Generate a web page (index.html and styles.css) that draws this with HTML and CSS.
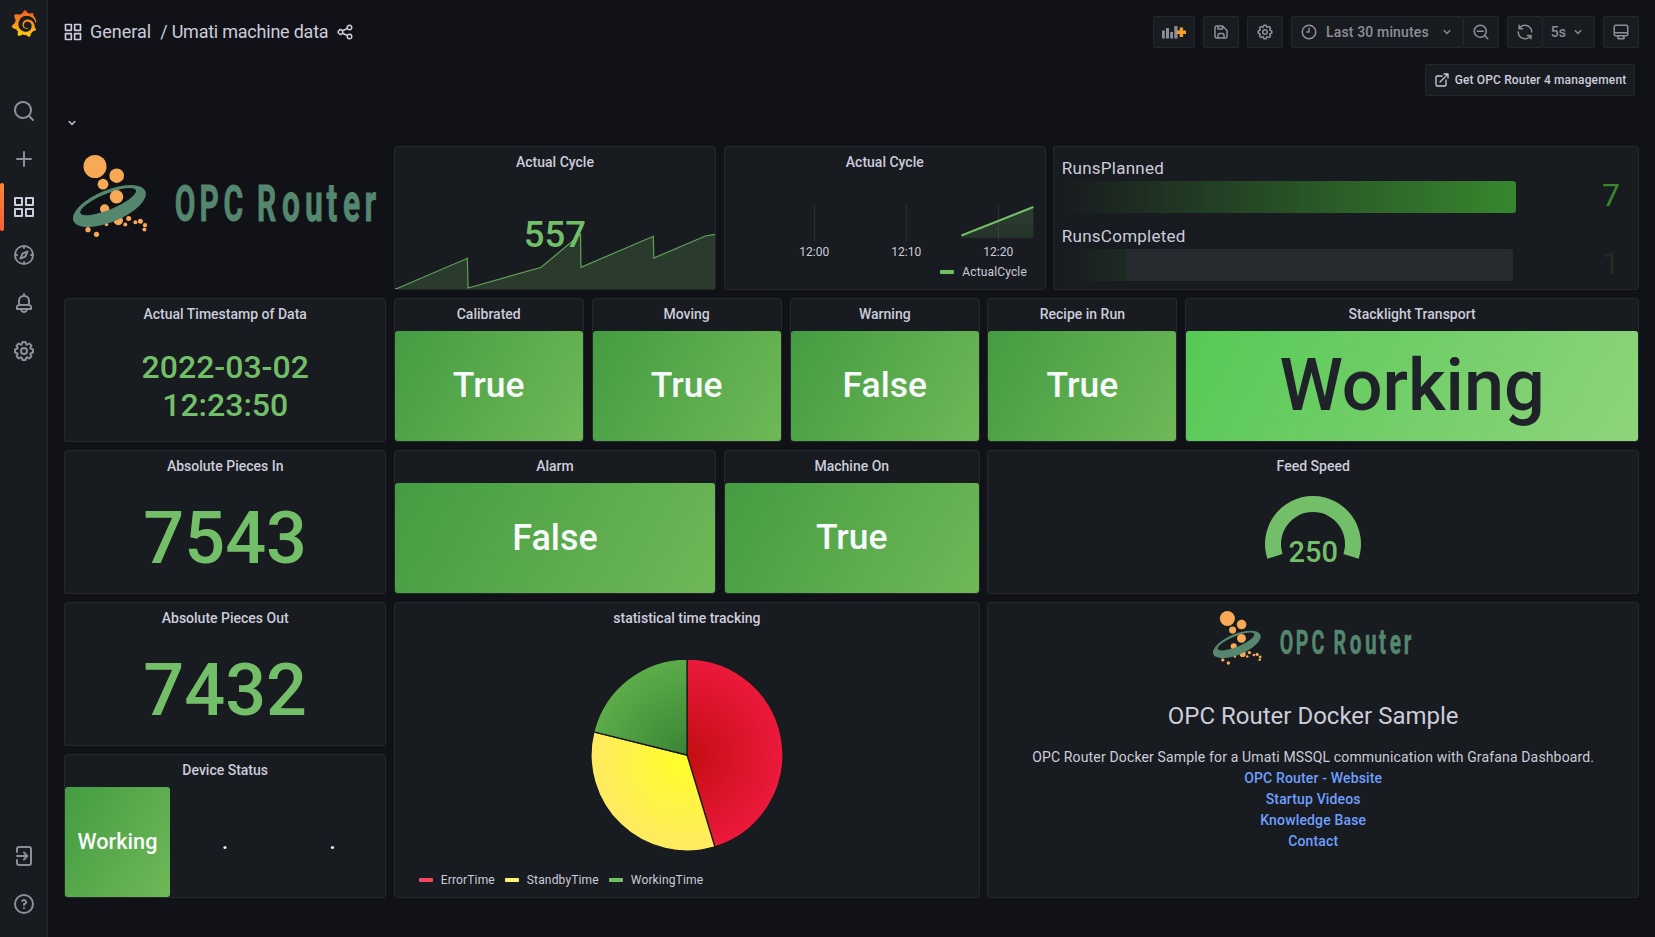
FILE: index.html
```html
<!DOCTYPE html>
<html lang="en">
<head>
<meta charset="utf-8">
<title>Umati machine data - Grafana</title>
<link rel="stylesheet" href="styles.css">
</head>
<body>
<svg class="sprite" width="0" height="0" aria-hidden="true">
  <defs>
    <linearGradient id="grafana-fill" x1="0" y1="1" x2="0" y2="0"><stop offset="0" stop-color="#fcd00a"/><stop offset="1" stop-color="#f05a28"/></linearGradient>
    <symbol id="i-grafana" viewBox="0 0 351 365"><path fill="url(#grafana-fill)" d="M342,161.2c-0.6-6.1-1.6-13.1-3.6-20.9c-2-7.7-5-16.2-9.4-25c-4.4-8.8-10.1-17.9-17.5-26.8c-2.9-3.5-6.1-6.9-9.5-10.2c5.1-20.3-6.2-37.9-6.2-37.9c-19.5-1.2-31.9,6.1-36.5,9.4c-0.8-0.3-1.5-0.7-2.3-1c-3.3-1.3-6.7-2.6-10.3-3.7c-3.5-1.1-7.1-2.1-10.8-3c-3.7-0.9-7.4-1.6-11.2-2.2c-0.7-0.1-1.3-0.2-2-0.3c-8.5-27.2-32.9-38.6-32.9-38.6c-27.3,17.3-32.4,41.5-32.4,41.5s-0.1,0.5-0.3,1.4c-1.5,0.4-3,0.9-4.5,1.3c-2.1,0.6-4.2,1.4-6.2,2.2c-2.1,0.8-4.1,1.6-6.2,2.5c-4.1,1.8-8.2,3.8-12.2,6c-3.9,2.2-7.7,4.6-11.4,7.1c-0.5-0.2-1-0.4-1-0.4c-37.8-14.4-71.3,2.9-71.3,2.9c-3.1,40.2,15.1,65.5,18.7,70.1c-0.9,2.5-1.7,5-2.5,7.5c-2.8,9.1-4.9,18.4-6.2,28.1c-0.2,1.4-0.4,2.8-0.5,4.2C18.8,192.7,8.5,228,8.5,228c29.1,33.5,63.1,35.6,63.1,35.6c0,0,0.1-0.1,0.1-0.1c4.3,7.7,9.3,15,14.9,21.9c2.4,2.9,4.8,5.6,7.4,8.3c-10.6,30.4,1.5,55.6,1.5,55.6c32.4,1.2,53.7-14.2,58.2-17.7c3.2,1.1,6.5,2.1,9.8,2.9c10,2.6,20.2,4.1,30.4,4.5c2.5,0.1,5.1,0.2,7.6,0.1l5.2-0.1l0,0.1c15.3,21.8,42.1,24.9,42.1,24.9c19.1-20.1,20.2-40.1,20.2-44.4c0-0.6,0-1.2,0-1.8c4-2.8,7.8-5.8,11.4-9.1c7.6-6.9,14.3-14.8,19.9-23.3c0.5-0.8,1-1.6,1.5-2.4c21.6,1.2,36.9-13.4,36.9-13.4c-3.6-22.5-16.4-33.5-19.1-35.6c-0.3-0.3-0.6-0.5-1-0.7c0.1-1.4,0.2-2.7,0.3-4.1c0.2-2.4,0.2-4.9,0.2-7.3l0-3.8l-0.2-3.5c-0.1-1.3-0.2-2.6-0.4-3.8l-0.5-3.8c-0.4-2.5-0.8-4.9-1.4-7.4c-2.3-9.7-6.1-18.9-11-27.2c-5-8.3-11.2-15.6-18.3-21.8c-7-6.2-14.9-11.2-23.1-14.9c-8.3-3.7-16.9-6.1-25.5-7.2c-4.3-0.6-8.6-0.8-12.9-0.7l-4.8,0.1c-0.6,0-1.2,0.1-1.7,0.1c-2.2,0.2-4.4,0.5-6.5,0.9c-8.6,1.6-16.7,4.7-23.8,9c-7.1,4.3-13.3,9.6-18.3,15.6c-5,6-8.9,12.7-11.6,19.6c-2.7,6.9-4.2,14.1-4.6,21c-0.1,1.7-0.1,3.5-0.1,5.2l0.1,2.7c0.1,0.8,0.1,1.7,0.2,2.5c0.3,3.5,1,6.9,1.9,10.1c1.9,6.5,4.9,12.4,8.6,17.4c3.7,5,8.2,9.1,12.9,12.4c4.7,3.2,9.8,5.5,14.8,7c5,1.5,10,2.1,14.7,2.1c1.7,0,3.4,0,5-0.2c3-0.3,5-0.7,7.2-1.3c2-0.7,4-1.5,5.7-2.4c1.8-0.9,3.4-2,5-3c0.4-0.3,0.9-0.6,1.3-1c1.6-1.3,1.9-3.7,0.6-5.3c-1.1-1.4-3.1-1.8-4.7-0.9c-0.4,0.2-0.8,0.4-1.2,0.6c-1.4,0.7-2.8,1.3-4.3,1.8c-1.5,0.5-3.1,0.9-4.7,1.2c-2.4,0.3-5,0.4-7.7,0.3c-3.7-0.2-9.4-1.3-14.3-3.6c-3.6-1.6-7-3.8-10.1-6.6c-3.1-2.8-5.8-6.1-7.9-9.9c-2.1-3.8-3.6-8-4.3-12.4c-0.3-2.2-0.5-4.5-0.4-6.7c0.1-2.1,0.4-4.9,0.7-7.1c1.7-9.6,6.5-19,13.9-26.1c1.9-1.8,3.9-3.4,6-4.9c2.1-1.5,4.4-2.8,6.8-3.9c2.4-1.1,4.8-2,7.4-2.7c2.5-0.7,5.1-1.1,7.8-1.4c2.6-0.2,5.4-0.2,8.2-0.1c2.9,0.2,5.7,0.6,8.5,1.3c5.6,1.2,11.1,3.3,16.2,6.1c10.2,5.7,18.9,14.5,24.2,25.1c2.7,5.3,4.6,11,5.5,16.9c0.2,1.5,0.4,3,0.5,4.5l0.2,4.4l0,2.1c0,1.6-0.1,2.4-0.1,3.7c-0.1,1.6-0.3,3.3-0.5,4.9c-0.5,3.2-1.1,6.4-1.9,9.5c-0.8,3.1-1.8,6.2-3,9.3c-2.4,6-5.6,11.8-9.4,17.1c-7.7,10.6-18.2,19.2-30.2,24.7c-6,2.7-12.3,4.7-18.8,5.7c-3.2,0.6-6.5,0.9-9.8,1l-5,0c-1.8,0-3.5-0.1-5.3-0.3c-7-0.5-13.9-1.8-20.7-3.7c-6.7-1.9-13.2-4.6-19.4-7.8c-12.3-6.6-23.4-15.6-32-26.5c-4.3-5.4-8.1-11.3-11.2-17.4c-3.1-6.1-5.6-12.6-7.4-19.1c-1.8-6.6-2.9-13.3-3.4-20.1l-0.2-9c0.1-3.3,0.4-6.8,0.8-10.2c0.4-3.4,1-6.9,1.7-10.3c0.7-3.4,1.5-6.8,2.5-10.2c1.9-6.7,4.3-13.2,7.1-19.3c5.7-12.2,13.1-23.1,22-31.8c2.2-2.2,4.5-4.2,6.9-6.2c2.4-1.9,4.9-3.7,7.5-5.4c2.5-1.7,5.2-3.2,7.9-4.6c10-5 22-8.700 34-10.500c12-1.500 20-1.500 29-1c5.800,0.200 11.500,0.900 17,1.900c11.100,2.100,21.500,5.600,31,10.300c9.500,4.600,17.900,10.300,25.300,16.500c6,5 12,11 17,17c5.200,6.700,9.400,13.500,12.700,19.900c5,10 7,18 8.900,26.500c0.300,1.400,1.600,2.300,3,2.100c1.500-0.100,2.600-1.300,2.600-2.800C342.600,170.400,342.500,166.100,342,161.200z"/></symbol>
    <symbol id="i-search" viewBox="0 0 24 24"><path d="M21.71,20.29,18,16.61A9,9,0,1,0,16.61,18l3.68,3.68a1,1,0,0,0,1.42,0A1,1,0,0,0,21.71,20.29ZM11,18a7,7,0,1,1,7-7A7,7,0,0,1,11,18Z"/></symbol>
    <symbol id="i-zoom-out" viewBox="0 0 24 24"><path d="M21.71,20.29,18,16.61A9,9,0,1,0,16.61,18l3.68,3.68a1,1,0,0,0,1.42,0A1,1,0,0,0,21.71,20.29ZM11,18a7,7,0,1,1,7-7A7,7,0,0,1,11,18ZM15,10H7a1,1,0,0,0,0,2h8a1,1,0,0,0,0-2Z"/></symbol>
    <symbol id="i-plus" viewBox="0 0 24 24"><path d="M19,11H13V5a1,1,0,0,0-2,0v6H5a1,1,0,0,0,0,2h6v6a1,1,0,0,0,2,0V13h6a1,1,0,0,0,0-2Z"/></symbol>
    <symbol id="i-apps" viewBox="0 0 24 24"><path d="M10,13H3a1,1,0,0,0-1,1v7a1,1,0,0,0,1,1h7a1,1,0,0,0,1-1V14A1,1,0,0,0,10,13ZM9,20H4V15H9ZM21,2H14a1,1,0,0,0-1,1v7a1,1,0,0,0,1,1h7a1,1,0,0,0,1-1V3A1,1,0,0,0,21,2ZM20,9H15V4h5Zm1,4H14a1,1,0,0,0-1,1v7a1,1,0,0,0,1,1h7a1,1,0,0,0,1-1V14A1,1,0,0,0,21,13Zm-1,7H15V15h5ZM10,2H3A1,1,0,0,0,2,3v7a1,1,0,0,0,1,1h7a1,1,0,0,0,1-1V3A1,1,0,0,0,10,2ZM9,9H4V4H9Z"/></symbol>
    <symbol id="i-compass" viewBox="0 0 24 24"><path d="M12,2A10,10,0,1,0,22,12,10,10,0,0,0,12,2Zm1,17.93V19a1,1,0,0,0-2,0v.93A8,8,0,0,1,4.070,13H5a1,1,0,0,0,0-2H4.070A8,8,0,0,1,11,4.070V5a1,1,0,0,0,2,0V4.070A8,8,0,0,1,19.930,11H19a1,1,0,0,0,0,2h.93A8,8,0,0,1,13,19.930ZM15.140,7.550l-5,2.120a1,1,0,0,0-.52.52l-2.120,5a1,1,0,0,0,.21,1.100,1,1,0,0,0,.7.3.93.93,0,0,0,.4-.09l5-2.120a1,1,0,0,0,.52-.52l2.120-5a1,1,0,0,0-1.310-1.310Zm-2.490,5.100-2.280,1,1-2.280,2.280-1Z"/></symbol>
    <symbol id="i-bell" viewBox="0 0 24 24"><path d="M18,13.18V10a6,6,0,0,0-5-5.91V3a1,1,0,0,0-2,0V4.090A6,6,0,0,0,6,10v3.180A3,3,0,0,0,4,16v2a1,1,0,0,0,1,1H8.140a4,4,0,0,0,7.720,0H19a1,1,0,0,0,1-1V16A3,3,0,0,0,18,13.180ZM8,10a4,4,0,0,1,8,0v3H8Zm4,10a2,2,0,0,1-1.720-1h3.440A2,2,0,0,1,12,20Zm6-3H6V16a1,1,0,0,1,1-1H17a1,1,0,0,1,1,1Z"/></symbol>
    <symbol id="i-cog" viewBox="0 0 24 24"><path d="M21.32,9.55l-1.89-.63.89-1.78A1,1,0,0,0,20.13,6L18,3.87a1,1,0,0,0-1.15-.19l-1.78.89-.63-1.89A1,1,0,0,0,13.5,2h-3a1,1,0,0,0-.95.68L8.92,4.57,7.14,3.68A1,1,0,0,0,6,3.87L3.87,6a1,1,0,0,0-.19,1.15l.89,1.78-1.89.63A1,1,0,0,0,2,10.5v3a1,1,0,0,0,.68.95l1.89.63-.89,1.78A1,1,0,0,0,3.87,18L6,20.13a1,1,0,0,0,1.15.19l1.78-.89.63,1.89a1,1,0,0,0,.95.68h3a1,1,0,0,0,.95-.68l.63-1.89,1.78.89A1,1,0,0,0,18,20.13L20.13,18a1,1,0,0,0,.19-1.15l-.89-1.78,1.89-.63A1,1,0,0,0,22,13.5v-3A1,1,0,0,0,21.32,9.55ZM20,12.78l-1.2.4A2,2,0,0,0,17.64,16l.57,1.14-1.1,1.1L16,17.64a2,2,0,0,0-2.79,1.16l-.4,1.2H11.22l-.4-1.2A2,2,0,0,0,8,17.64l-1.14.57-1.1-1.1L6.36,16A2,2,0,0,0,5.2,13.18L4,12.78V11.22l1.2-.4A2,2,0,0,0,6.36,8L5.79,6.89l1.1-1.1L8,6.36A2,2,0,0,0,10.82,5.2l.4-1.2h1.56l.4,1.2A2,2,0,0,0,16,6.36l1.14-.57,1.1,1.1L17.64,8a2,2,0,0,0,1.16,2.79l1.2.4ZM12,8a4,4,0,1,0,4,4A4,4,0,0,0,12,8Zm0,6a2,2,0,1,1,2-2A2,2,0,0,1,12,14Z"/></symbol>
    <symbol id="i-signin" viewBox="0 0 24 24"><path fill="none" stroke="currentColor" stroke-width="2" stroke-linecap="round" stroke-linejoin="round" d="M5,8V5a2,2,0,0,1,2-2H17a2,2,0,0,1,2,2V19a2,2,0,0,1-2,2H7a2,2,0,0,1-2-2V16M5,12H15M12,8.500L15.300,12L12,15.500"/></symbol>
    <symbol id="i-help" viewBox="0 0 24 24"><path d="M11.29,15.29a1.58,1.58,0,0,0-.12.15.76.76,0,0,0-.09.18.64.64,0,0,0-.06.18,1.36,1.36,0,0,0,0,.2.84.84,0,0,0,.08.38.9.9,0,0,0,.54.54.94.94,0,0,0,.76,0,.9.9,0,0,0,.54-.54A1,1,0,0,0,13,16a1,1,0,0,0-.29-.71A1,1,0,0,0,11.290,15.290ZM12,2A10,10,0,1,0,22,12,10,10,0,0,0,12,2Zm0,18a8,8,0,1,1,8-8A8,8,0,0,1,12,20ZM12,7A3,3,0,0,0,9.400,8.500a1,1,0,1,0,1.730,1A1,1,0,0,1,12,9a1,1,0,0,1,0,2,1,1,0,0,0-1,1v1a1,1,0,0,0,2,0v-.18A3,3,0,0,0,12,7Z"/></symbol>
    <symbol id="i-share" viewBox="0 0 24 24"><path d="M18,14a4,4,0,0,0-3.080,1.480l-5.100-2.350a3.640,3.640,0,0,0,0-2.260l5.100-2.350A4,4,0,1,0,14,6a4.170,4.170,0,0,0,.07.71L8.790,9.140a4,4,0,1,0,0,5.720l5.280,2.430A4.170,4.170,0,0,0,14,18a4,4,0,1,0,4-4ZM18,4a2,2,0,1,1-2,2A2,2,0,0,1,18,4ZM6,14a2,2,0,1,1,2-2A2,2,0,0,1,6,14Zm12,6a2,2,0,1,1,2-2A2,2,0,0,1,18,20Z"/></symbol>
    <symbol id="i-down" viewBox="0 0 24 24"><path d="M17,9.170a1,1,0,0,0-1.410,0L12,12.710,8.460,9.170a1,1,0,0,0-1.410,0,1,1,0,0,0,0,1.420l4.240,4.240a1,1,0,0,0,1.420,0L17,10.590A1,1,0,0,0,17,9.170Z"/></symbol>
    <symbol id="i-save" viewBox="0 0 24 24"><path d="M20.710,9.290l-6-6a1,1,0,0,0-.32-.21A1.090,1.090,0,0,0,14,3H6A3,3,0,0,0,3,6V18a3,3,0,0,0,3,3H18a3,3,0,0,0,3-3V10A1,1,0,0,0,20.710,9.290ZM9,5h4V7H9Zm6,14H9V16a1,1,0,0,1,1-1h4a1,1,0,0,1,1,1Zm4-1a1,1,0,0,1-1,1H17V16a3,3,0,0,0-3-3H10a3,3,0,0,0-3,3v3H6a1,1,0,0,1-1-1V6A1,1,0,0,1,6,5H7V8A1,1,0,0,0,8,9h6a1,1,0,0,0,1-1V6.410l4,4Z"/></symbol>
    <symbol id="i-clock" viewBox="0 0 24 24"><path d="M12,2A10,10,0,1,0,22,12,10,10,0,0,0,12,2Zm0,18a8,8,0,1,1,8-8A8,8,0,0,1,12,20ZM12,6a1,1,0,0,0-1,1v4H9a1,1,0,0,0,0,2h3a1,1,0,0,0,1-1V7A1,1,0,0,0,12,6Z"/></symbol>
    <symbol id="i-sync" viewBox="0 0 24 24"><path d="M19.910,15.510H15.380a1,1,0,0,0,0,2h2.400A8,8,0,0,1,4,12a1,1,0,1,0-2,0,10,10,0,0,0,16.880,7.230V21a1,1,0,0,0,2,0V16.500A1,1,0,0,0,19.910,15.510ZM12,2A10,10,0,0,0,5.120,4.770V3a1,1,0,0,0-2,0V7.500a1,1,0,0,0,1,1h4.500a1,1,0,0,0,0-2H6.220A8,8,0,0,1,20,12a1,1,0,0,0,2,0A10,10,0,0,0,12,2Z"/></symbol>
    <symbol id="i-monitor" viewBox="0 0 24 24"><path d="M19,2H5A3,3,0,0,0,2,5V15a3,3,0,0,0,3,3H7.640l-.58,1a2,2,0,0,0,0,2,2,2,0,0,0,1.750,1h6.460A2,2,0,0,0,17,21a2,2,0,0,0,0-2l-.59-1H19a3,3,0,0,0,3-3V5A3,3,0,0,0,19,2ZM8.770,20,10,18H14l1.200,2ZM20,15a1,1,0,0,1-1,1H5a1,1,0,0,1-1-1V14H20Zm0-3H4V5A1,1,0,0,1,5,4H19a1,1,0,0,1,1,1Z"/></symbol>
    <symbol id="i-external" viewBox="0 0 24 24"><path d="M18,10.820a1,1,0,0,0-1,1V19a1,1,0,0,1-1,1H5a1,1,0,0,1-1-1V8A1,1,0,0,1,5,7h7.180a1,1,0,0,0,0-2H5A3,3,0,0,0,2,8V19a3,3,0,0,0,3,3H16a3,3,0,0,0,3-3V11.820A1,1,0,0,0,18,10.820Zm3.920-8.200a1,1,0,0,0-.54-.54A1,1,0,0,0,21,2H15a1,1,0,0,0,0,2h3.590L8.290,14.290a1,1,0,0,0,0,1.420,1,1,0,0,0,1.420,0L20,5.410V9a1,1,0,0,0,2,0V3A1,1,0,0,0,21.920,2.620Z"/></symbol>
    <symbol id="logo" viewBox="0 0 304 84">
      <g fill="#f8a955">
        <circle cx="22" cy="11.500" r="11.500"/><circle cx="43.700" cy="20.700" r="7.300"/><circle cx="30" cy="29.200" r="5.400"/>
        <circle cx="31.700" cy="54" r="4.700"/><circle cx="45.300" cy="65.500" r="4.700"/>
        <circle cx="15" cy="74.700" r="2.600"/><circle cx="23.500" cy="79.300" r="2.600"/><circle cx="33.500" cy="69.500" r="1.800"/>
        <circle cx="52.300" cy="69.400" r="2"/><circle cx="55.700" cy="63.400" r="2.500"/><circle cx="62.400" cy="67.200" r="2"/><circle cx="67.400" cy="66.300" r="2.500"/><circle cx="72" cy="70.200" r="2.100"/><circle cx="71.400" cy="74.500" r="2"/>
      </g>
      <path fill="#55876f" fill-rule="evenodd" transform="translate(36.400 51) rotate(-22.500)" d="M-38.900,0a38.900,16 0 1 0 77.800,0a38.900,16 0 1 0 -77.800,0ZM-29.500,-4.500a30,8 0 1 0 60,0a30,8 0 1 0 -60,0Z"/>
      <circle cx="43.500" cy="41.800" r="6.800" fill="#f8a955"/>
      <text class="logo-text" transform="translate(102 65.500) scale(.6 1)"><tspan x="-.3 40.800 80.800 110 136.500">OPC R</tspan><tspan class="logo-lower" x="178.400 216.700 252.500 280 315.700">outer</tspan></text>
    </symbol>
  </defs>
</svg>

<div class="app">
  <nav class="sidebar">
    <a class="brand"><svg><use href="#i-grafana"/></svg></a>
    <a class="nav-item"><svg><use href="#i-search"/></svg></a>
    <a class="nav-item"><svg><use href="#i-plus"/></svg></a>
    <a class="nav-item active"><svg><use href="#i-apps"/></svg></a>
    <a class="nav-item"><svg><use href="#i-compass"/></svg></a>
    <a class="nav-item"><svg><use href="#i-bell"/></svg></a>
    <a class="nav-item"><svg><use href="#i-cog"/></svg></a>
    <span class="spacer"></span>
    <a class="nav-item"><svg><use href="#i-signin"/></svg></a>
    <a class="nav-item"><svg><use href="#i-help"/></svg></a>
  </nav>

  <main class="main">
    <header class="toolbar">
      <svg class="ic20"><use href="#i-apps"/></svg>
      <h1 class="crumbs"><span>General</span><span class="crumb-title">/ Umati machine data</span></h1>
      <svg class="ic18"><use href="#i-share"/></svg>
      <span class="spacer"></span>
      <div class="btn add"><svg class="add-icon" viewBox="0 0 24 14"><path fill="#8e8e99" d="M0,5.500h2.800V13.500H0ZM4,3h3v10.500H4ZM8.200,7h2.800v6.500H8.200ZM12.300,1h3.200v12.500h-3.200Z"/><path fill="#f89d2c" d="M17.700,2.500h3.400v3h2.900v3.400h-2.900v3h-3.400v-3h-2.900V5.500h2.900Z"/></svg></div>
      <div class="btn"><svg class="ic18"><use href="#i-save"/></svg></div>
      <div class="btn"><svg class="ic18"><use href="#i-cog"/></svg></div>
      <div class="group">
        <div class="btn range"><svg class="ic18"><use href="#i-clock"/></svg><span>Last 30 minutes</span><svg class="ic16"><use href="#i-down"/></svg></div>
        <div class="btn zoom"><svg class="ic18"><use href="#i-zoom-out"/></svg></div>
      </div>
      <div class="group">
        <div class="btn"><svg class="ic18"><use href="#i-sync"/></svg></div>
        <div class="btn rate"><span>5s</span><svg class="ic16"><use href="#i-down"/></svg></div>
      </div>
      <div class="btn"><svg class="ic18"><use href="#i-monitor"/></svg></div>
    </header>

    <div class="links"><a class="btn link"><svg class="ic16"><use href="#i-external"/></svg><span>Get OPC Router 4 management</span></a></div>
    <div class="row-toggle"><svg class="ic16"><use href="#i-down"/></svg></div>

    <div class="grid">
      <section class="w5 h4 logo-panel"><svg class="logo-big"><use href="#logo"/></svg></section>
      <section class="panel snap w5 h4">
        <h2>Actual Cycle</h2>
        <div class="body spark">
          <svg class="spark-svg" viewBox="0 0 320 57" preserveAspectRatio="none"><path fill="#73bf69" fill-opacity=".2" d="M0,57L2,56.500L72.300,26.300L73,56L146,35.300L185.300,2.300L185.700,35.300L258,4.300L258.500,26L310,4L320,2.200V57Z"/><path fill="none" stroke="#5fa257" stroke-width="1.200" d="M0,56.700L2,56.500L72.300,26.300L73,56L146,35.300L185.300,2.300L185.700,35.300L258,4.300L258.500,26L310,4L320,2.200"/></svg>
          <span class="v557">557</span>
        </div>
      </section>
      <section class="panel snap w5 h4">
        <h2>Actual Cycle</h2>
        <div class="body series">
          <svg viewBox="0 0 320 80" width="320" height="80">
            <defs><linearGradient id="area" x1="0" y1="0" x2="0" y2="1"><stop offset="0" stop-color="#73bf69" stop-opacity=".22"/><stop offset="1" stop-color="#73bf69" stop-opacity=".14"/></linearGradient></defs>
            <path stroke="#2c2f35" d="M89.400,25V63M181.400,25V63M273.400,25V63"/>
            <path fill="url(#area)" d="M236.400,56L308.400,28V59H236.400Z"/>
            <path stroke="#73bf69" stroke-width="2" d="M236.400,56.500L308.400,28"/>
            <g class="tick"><text x="89.200" y="76.500">12:00</text><text x="181.200" y="76.500">12:10</text><text x="273.200" y="76.500">12:20</text></g>
          </svg>
          <div class="legend right"><i class="green"></i><span>ActualCycle</span></div>
        </div>
      </section>
      <section class="panel w9 h4 bars">
        <div class="bar-label">RunsPlanned</div>
        <div class="bar-row"><div class="track full"><div class="fill full-fill"></div></div><span class="num">7</span></div>
        <div class="bar-label second">RunsCompleted</div>
        <div class="bar-row"><div class="track"><div class="fill dim-fill"></div></div><span class="num dim">1</span></div>
      </section>

      <section class="panel snap w5 h4"><h2>Actual Timestamp of Data</h2><div class="body stat date">2022-03-02<br>12:23:50</div></section>
      <section class="panel w3 h4"><h2>Calibrated</h2><div class="body stat bg">True</div></section>
      <section class="panel w3 h4"><h2>Moving</h2><div class="body stat bg">True</div></section>
      <section class="panel snap w3 h4"><h2>Warning</h2><div class="body stat bg">False</div></section>
      <section class="panel w3 h4"><h2>Recipe in Run</h2><div class="body stat bg">True</div></section>
      <section class="panel w7 h4"><h2>Stacklight Transport</h2><div class="body stat bg light">Working</div></section>

      <section class="panel snap w5 h4"><h2>Absolute Pieces In</h2><div class="body stat big">7543</div></section>
      <section class="panel snap w5 h4"><h2>Alarm</h2><div class="body stat bg alarm">False</div></section>
      <section class="panel snap w4 h4"><h2>Machine On</h2><div class="body stat bg">True</div></section>
      <section class="panel w10 h4"><h2>Feed Speed</h2>
        <div class="body gauge"><svg width="100" height="64" viewBox="-50 -48 100 64"><path fill="#73bf69" d="M-45.650,14.830A48,48 0 1 1 45.650,14.830L30.430,9.890A32,32 0 1 0 -30.430,9.890Z"/></svg><span class="gauge-val">250</span></div></section>

      <section class="panel snap w5 h4"><h2>Absolute Pieces Out</h2><div class="body stat big">7432</div></section>
      <section class="panel snap w9 h8"><h2>statistical time tracking</h2>
        <div class="body pie">
          <svg width="194" height="194" viewBox="-97 -97 194 194">
            <defs>
              <radialGradient id="pr" gradientUnits="userSpaceOnUse" cx="0" cy="0" r="96"><stop offset="0" stop-color="#c40e12"/><stop offset="1" stop-color="#ec193c"/></radialGradient>
              <radialGradient id="py" gradientUnits="userSpaceOnUse" cx="0" cy="0" r="96"><stop offset="0" stop-color="#ffff26"/><stop offset="1" stop-color="#ffea62"/></radialGradient>
              <radialGradient id="pg" gradientUnits="userSpaceOnUse" cx="0" cy="0" r="96"><stop offset="0" stop-color="#3a8436"/><stop offset="1" stop-color="#5cac49"/></radialGradient>
            </defs>
            <g stroke="#181b1f" stroke-width="1.300" stroke-linejoin="round">
              <path fill="url(#pr)" d="M0,0V-96A96,96 0 0 1 27.900,91.850Z"/>
              <path fill="url(#py)" d="M0,0L27.900,91.850A96,96 0 0 1 -93.150,-23.220Z"/>
              <path fill="url(#pg)" d="M0,0L-93.150,-23.220A96,96 0 0 1 0,-96Z"/>
            </g>
          </svg>
          <div class="legend"><i class="red"></i><span>ErrorTime</span><i class="yellow"></i><span>StandbyTime</span><i class="green"></i><span>WorkingTime</span></div>
        </div>
      </section>
      <section class="panel w10 h8 text">
        <svg class="logo-small"><use href="#logo"/></svg>
        <h3>OPC Router Docker Sample</h3>
        <p>OPC Router Docker Sample for a Umati MSSQL communication with Grafana Dashboard.</p>
        <a>OPC Router - Website</a><a>Startup Videos</a><a>Knowledge Base</a><a>Contact</a>
      </section>
      <section class="panel snap w5 h4"><h2>Device Status</h2>
        <div class="body device"><div class="stat bg small">Working</div><div class="stat small">.</div><div class="stat small">.</div></div></section>
    </div>
  </main>
</div>
</body>
</html>
```
FILE: styles.css
```css
* { box-sizing: border-box; }
body { margin: 0; background: #111217; color: #ccccdc; font: 14px/1.5 Roboto, "Liberation Sans", sans-serif; }
svg { fill: currentColor; flex: none; display: block; }
.sprite { position: absolute; }
h1, h2, h3, p { margin: 0; }
.app { display: flex; height: 937px; overflow: hidden; }
.spacer { flex: 1; }

.sidebar { width: 48px; flex: none; display: flex; flex-direction: column; background: #181b1f; border-right: 1px solid #24272c; padding-bottom: 9px; color: #8e8e99; }
.brand { height: 87px; padding: 10px 0 0 11px; }
.brand svg { width: 26px; height: 27px; }
.nav-item { height: 48px; display: flex; align-items: center; padding-left: 12px; }
.nav-item svg { width: 24px; height: 24px; }
.nav-item.active { color: #ccccdc; padding-left: 8px; }
.nav-item.active::before { content: ""; width: 4px; height: 48px; margin-left: -8px; margin-right: 8px; border-radius: 2px; background: linear-gradient(#ff8833, #f55f3e); }

.main { flex: 1; min-width: 0; display: flex; flex-direction: column; }
.toolbar { display: flex; align-items: center; height: 64px; padding: 0 16px 0 15px; gap: 8px; }
.crumbs { display: flex; gap: 9px; font-size: 18px; font-weight: 400; line-height: 24px; margin-left: -1px; }
.crumb-title { letter-spacing: -.23px; }
.ic16 { width: 16px; height: 16px; }
.ic18 { width: 18px; height: 18px; }
.ic20 { width: 20px; height: 20px; }
.btn { height: 32px; min-width: 36px; display: flex; align-items: center; justify-content: center; background: #181b1f; border: 1px solid #24272c; border-radius: 2px; color: #8e8e99; font-weight: 500; letter-spacing: .15px; }
.btn.add { width: 42px; }
.add-icon { width: 24px; height: 14px; }
.group { display: flex; }
.group .btn + .btn { border-left: 0; }
.btn.range { width: 173px; padding: 0 8px; justify-content: flex-start; gap: 8px; }
.btn.range .ic16 { margin-left: auto; }
.btn.zoom { min-width: 35px; }
.btn.rate { width: 52px; gap: 4px; }
.links { display: flex; justify-content: flex-end; padding-right: 20px; height: 32px; }
.btn.link { width: 210px; color: #ccccdc; font-size: 12px; gap: 5px; letter-spacing: .15px; }
.row-toggle { height: 50px; padding: 19px 0 0 16px; }

.grid { display: grid; grid-template-columns: repeat(24, 1fr); grid-auto-rows: 30px; gap: 8px; padding: 0 16px; }
.w3 { grid-column: span 3; }
.w4 { grid-column: span 4; }
.w5 { grid-column: span 5; }
.w7 { grid-column: span 7; }
.w9 { grid-column: span 9; }
.w10 { grid-column: span 10; }
.h4 { grid-row: span 4; }
.h8 { grid-row: span 8; }
.panel { background: #181b1f; border: 1px solid #24272c; border-radius: 3px; display: flex; flex-direction: column; min-width: 0; }
.snap { margin-right: -.6px; }
.panel h2 { flex: none; height: 32px; font-size: 14px; line-height: 31px; font-weight: 500; text-align: center; }
.body { flex: 1; min-height: 0; }

.logo-panel { padding: 9px 0 0 9px; }
.logo-big { width: 304px; height: 84px; }
.logo-text { font: 700 50px Roboto, sans-serif; fill: #55876f; stroke: #55876f; stroke-width: .8px; }
.logo-lower { font-size: 53px; }

.stat { display: flex; align-items: center; justify-content: center; text-align: center; font-weight: 500; line-height: 1.2; color: #73bf69; padding-top: 1px; }
.stat.date { font-size: 32px; line-height: 38px; padding-top: 0; }
.stat.big { font-size: 72px; padding-top: 3px; }
.stat.bg { color: #f7f8fa; font-size: 35.500px; border-radius: 3px; padding: 0 0 1px; background: linear-gradient(120deg, #449c42, #6fb857); }
.stat.bg.alarm { padding: 1px 0 0; font-size: 36px; }
.stat.bg.light { font-size: 72px; color: #1f2229; background: linear-gradient(120deg, #56c956, #8fd47b); padding: 1px 0 0; }
.device { display: grid; grid-template-columns: repeat(3, 105px); gap: 2.500px; }
.stat.small, .stat.bg.small { font-size: 21.700px; color: #f7f8fa; padding: 1px 0 0; }

.spark { display: flex; justify-content: center; padding-top: 32px; position: relative; }
.spark-svg { position: absolute; left: 0; right: 0; bottom: 0; width: 100%; height: 57px; }
.v557 { position: relative; font-size: 36.500px; font-weight: 500; line-height: 48px; color: #73bf69; }
.tick { font-size: 12px; text-anchor: middle; fill: #ccccdc; }
.legend { display: flex; align-items: center; font-size: 12px; line-height: 18px; letter-spacing: .15px; }
.legend i { width: 14px; height: 4px; border-radius: 1px; margin-right: 8px; }
.legend span { margin-right: 10px; }
.legend.right { justify-content: flex-end; padding-right: 8px; margin-top: 4px; }
.green { background: #73bf69; }
.red { background: #f2495c; }
.yellow { background: #fff17a; }

.bars { padding: 8px; }
.bar-label { font-size: 17px; letter-spacing: .25px; line-height: 26px; margin-left: -.5px; }
.bar-label.second { margin-top: 10px; }
.bar-row { display: flex; justify-content: space-between; height: 32px; }
.track { width: 451px; height: 32px; border-radius: 3px; background: linear-gradient(90deg, transparent 5%, #282b30 12%); }
.track.full { width: 454px; background: none; }
.fill { height: 32px; border-radius: 3px; }
.full-fill { background: linear-gradient(90deg, rgba(55,135,45,0), #37872d); }
.dim-fill { width: 65px; background: linear-gradient(90deg, #181b1f, #1d2b22); }
.num { width: 34px; font-size: 32px; line-height: 29px; color: #37872d; padding-right: 10px; display: flex; justify-content: flex-end; }
.num.dim { color: #1e2d22; }

.gauge { display: flex; flex-direction: column; align-items: center; padding-top: 13px; }
.gauge-val { font-size: 29px; font-weight: 500; line-height: 34px; margin-top: -25px; color: #73bf69; }
.pie { display: flex; flex-direction: column; padding-top: 23px; }
.pie > svg { align-self: center; }
.pie .legend { margin: 19px 0 0 24px; }
.text { align-items: center; padding-top: 8px; }
.logo-small { width: 201px; height: 55px; margin-right: 1px; }
.text h3 { font-size: 24px; font-weight: 400; line-height: 36px; margin-top: 32px; }
.text p { line-height: 21px; margin-top: 13px; letter-spacing: .15px; }
.text a { color: #6e9fff; font-weight: 500; line-height: 21px; letter-spacing: .15px; }
```
